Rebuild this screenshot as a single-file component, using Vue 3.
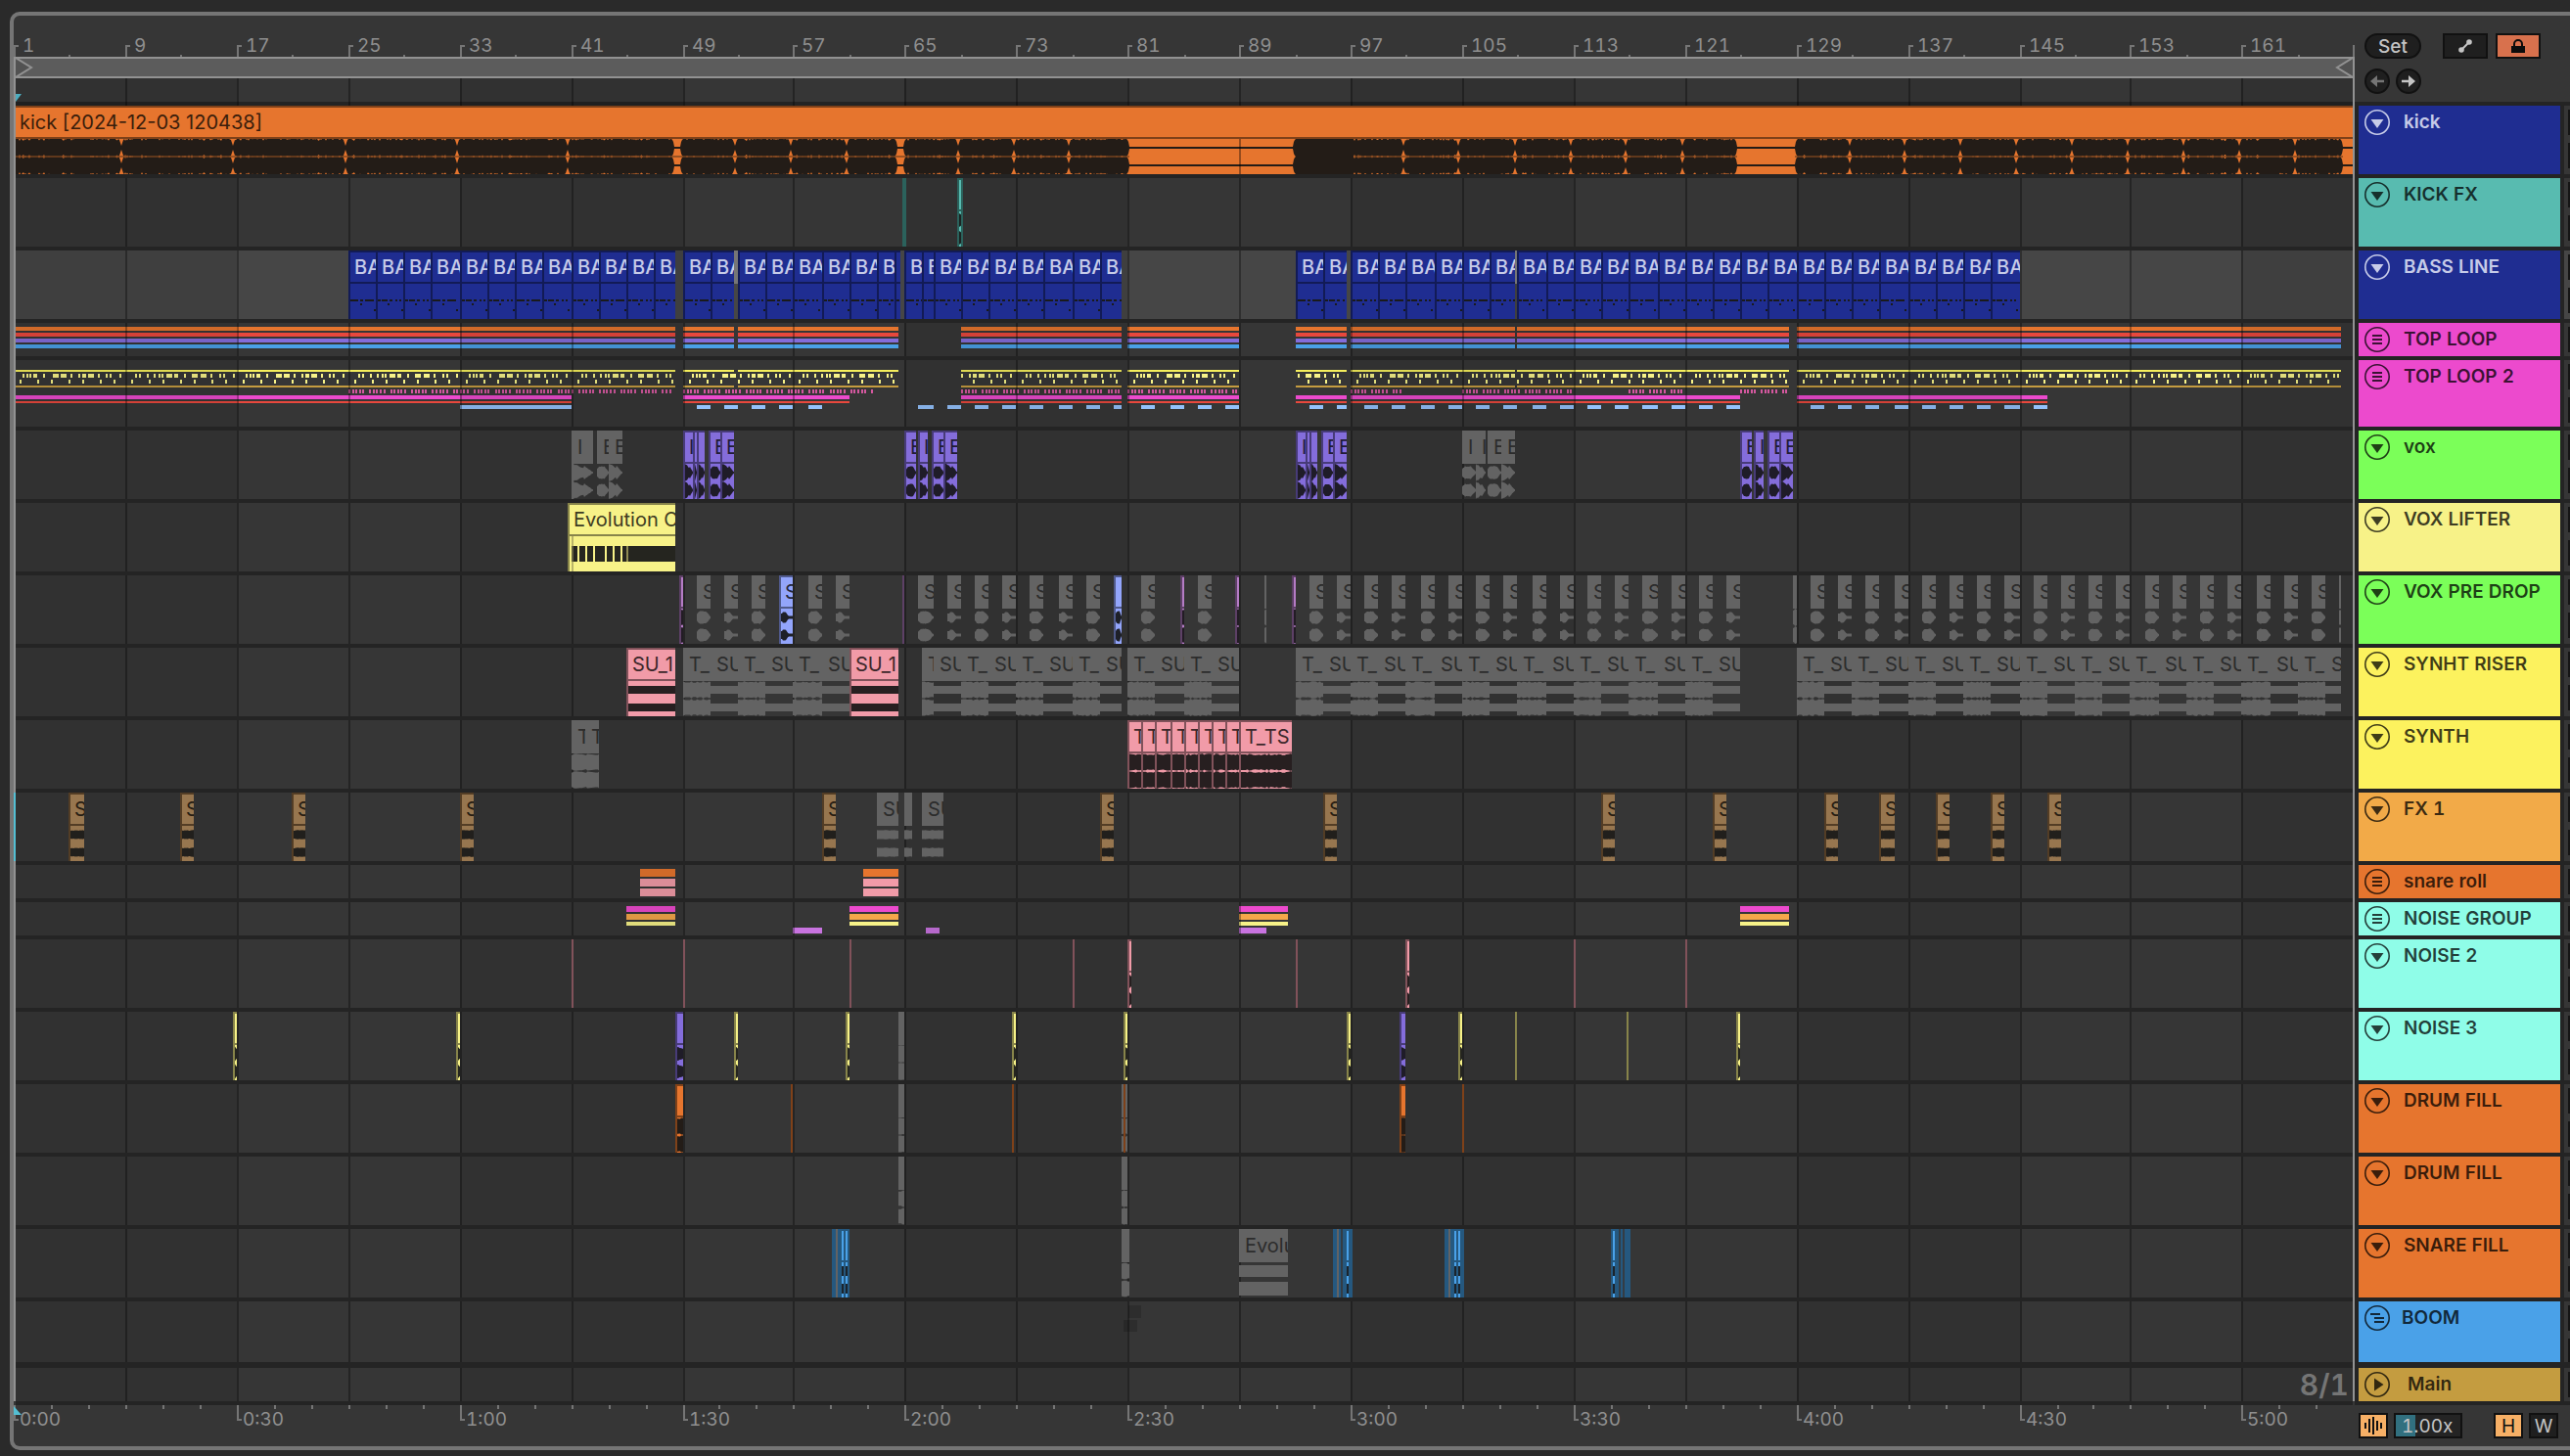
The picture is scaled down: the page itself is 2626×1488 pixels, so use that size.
<script setup>
// Timeline geometry: bar number -> device-snapped x inside the lane area.
const BAR = 14.23
const ORIGIN = 14.97
const EDGE = 16
const barX = (bar) => 2 * Math.floor((ORIGIN + BAR * (bar - 1)) / 2) - EDGE
const at = (x) => x - EDGE

const range = (from, to, step = 1) => {
  const out = []
  for (let i = from; i <= to; i += step) out.push(i)
  return out
}
const noise = (i) => {
  const v = Math.sin(i * 127.1 + 11.7) * 43758.5453
  return v - Math.floor(v)
}

/* ---------- rulers and grid ---------- */
const barTicks = range(1, 161, 8).map((bar) => ({ bar, x: barX(bar) }))
const minorTicks = range(5, 165, 8).map((bar) => barX(bar))
const gridLines = range(9, 161, 8).map((bar) => barX(bar))
const bands = range(1, 161, 32).map((bar) => ({ x: Math.max(0, barX(bar)), w: barX(bar + 16) - Math.max(0, barX(bar)) }))
const timeTicks = range(0, 10).map((i) => ({
  label: `${Math.floor(i / 2)}:${i % 2 ? '30' : '00'}`,
  x: barX(1 + i * 16),
}))
const timeMinor = range(1, 62).filter((i) => i % 6).map((i) => barX(1 + (i * 16) / 6))

/* ---------- waveforms ---------- */
function blob(w, profile, seed = 1) {
  const width = Math.max(2, w)
  let d = ''
  for (const c of [9, 27]) {
    const top = []
    const bottom = []
    for (let x = 0; x <= width; x += 1) {
      const h = profile(x, width, seed)
      top.push(`${x} ${(c - h).toFixed(1)}`)
      bottom.unshift(`${x} ${(c + h).toFixed(1)}`)
    }
    d += `M${top.join('L')}L${bottom.join('L')}Z`
  }
  return d
}
const profiles = {
  full: (x, w, s) => 8.8 - noise(Math.floor(x / 2) + s) * 1.6,
  vox: (x, w, s) => {
    const u = x / w
    const base = u < 0.1 ? 8.5 : u < 0.55 ? 6.2 + 1.6 * Math.sin(u * 9) : 7 * (1 - u) / 0.45
    return Math.max(0.8, base + noise(x + s) * 0.6)
  },
  round: (x, w, s) => {
    const u = x / w
    return Math.max(1, (u < 0.2 ? 4 + u * 14 : u < 0.65 ? 6.8 : 6.8 - (u - 0.65) * 16) - noise(x + s))
  },
  neck: (x, w) => {
    const u = x / w
    return u < 0.15 ? 4 : u < 0.4 ? 5.6 : Math.max(1.6, 5.6 - (u - 0.4) * 18)
  },
  band: () => 4,
  rough: (x, w, s) => 4.8 - noise(x + s) * 0.7,
  taper: (x, w, s) => 7.5 - noise(x + s) * 0.8 - (x / w) * 2,
}

const pinches = [
  124, 238, 353, 467, 580, 751, 808, 865, 979, 1036, 1092, 1434, 1490, 1548, 1605, 1661, 1719,
  1890, 1946, 2003, 2060, 2117, 2174, 2231, 2288, 2345,
].map(at)
const silences = [[689, 695], [917, 923], [1154, 1321], [1775, 1834], [2394, 2410]].map(([a, b]) => [at(a), at(b)])
const kickProfile = (x) => {
  for (const [a, b] of silences) if (x >= a && x <= b) return 1
  const spike = noise(x)
  let h = spike > 0.72 ? 9 - (spike - 0.72) * 7 : 9
  if (x > at(1321) && x < at(1384)) h = 9
  for (const p of pinches) {
    const d = Math.abs(x - p)
    if (d < 3) h = Math.min(h, 2 + d * 3)
  }
  for (const [a, b] of silences) {
    const d = Math.min(Math.abs(x - a), Math.abs(x - b))
    if (d < 3) h = Math.min(h, 4 + d * 2)
  }
  return h
}
const kickWave = blob(at(2404), kickProfile)

/* ---------- clips ---------- */
let seed = 0
function clip(kind, x1, x2, text = '', wave = 'full') {
  seed += 7
  const w = x2 - x1
  const inner = w - (kind === 'gray' ? 0 : 2)
  return {
    kind, text, wave, w, inner, x: x1,
    path: profiles[wave] && inner > 0 ? blob(inner, profiles[wave], seed) : '',
  }
}
const px = (kind, a, b, text, wave) => clip(kind, at(a), at(b), text, wave)
const bars = (kind, a, b, text, wave) => clip(kind, barX(a), barX(b), text, wave)

function chain(starts, end, make) {
  return starts.map((s, i) => make(s, i + 1 < starts.length ? starts[i + 1] : end, i))
}
const bass = (s, e) => bars('navy', s, e, e - s > 0.5 ? (e - s > 1.4 ? 'BA' : 'B') : '', 'midi')
const bassClips = [
  ...chain(range(25, 47, 2), 48.5, bass),
  ...chain([49, 51], 52.75, bass),
  ...chain([53, 55, 57, 59, 61, 63, 64.3], 64.65, bass),
  ...chain([65, 66.2, 67, 69, 71, 73, 75, 77, 79], 80.5, bass),
  ...chain([93, 95], 96.75, bass),
  ...chain(range(97, 107, 2), 108.85, bass),
  ...chain(range(109, 143, 2), 145, bass),
]

const voxA = (x) => [
  px('violet', x, x + 10, 'I', 'vox'), px('violet', x + 10, x + 14, '', 'vox'), px('violet', x + 14, x + 22, '', 'vox'),
  px('violet', x + 26, x + 38, 'E', 'round'), px('violet', x + 38, x + 52, 'E', 'vox'),
]
const voxB = (x) => [
  px('violet', x, x + 12, 'E', 'round'), px('violet', x + 14, x + 24, 'I', 'vox'),
  px('violet', x + 28, x + 40, 'E', 'round'), px('violet', x + 40, x + 54, 'E', 'vox'),
]
const voxClips = [
  px('gray', 584, 606, 'I', 'vox'), px('gray', 610, 622, 'E', 'round'), px('gray', 622, 636, 'E', 'vox'),
  ...voxA(698), ...voxB(924), ...voxA(1324),
  px('gray', 1494, 1508, 'I', 'round'), px('gray', 1508, 1518, 'I', 'vox'),
  px('gray', 1520, 1534, 'E', 'round'), px('gray', 1534, 1548, 'E', 'vox'),
  ...voxB(1778),
]

const drop = (b) => bars('gray', b, b + 1, 'S', b % 4 === 2 ? 'round' : 'neck')
const dropClips = [
  px('orchid', 694, 698), drop(50), drop(52), drop(54), bars('sky', 56, 57, 'S', 'neck'), drop(58), drop(60),
  px('orchid', 922, 924), ...range(66, 78, 2).map(drop), px('sky', 1138, 1146, '', 'round'), drop(82),
  px('orchid', 1206, 1210), drop(86), px('orchid', 1262, 1266), px('gray', 1292, 1294), px('orchid', 1320, 1324),
  ...range(94, 124, 2).map(drop), px('gray', 1832, 1836), ...range(130, 166, 2).map(drop), px('gray', 2390, 2392),
]

const riser = (s, e, i) => bars('gray', s, e, i % 2 ? 'SU' : e - s > 1 ? 'T_' : 'T', i % 2 ? 'band' : 'full')
const riserClips = [
  bars('pink', 45, 48.5, 'SU_1', 'band'),
  ...chain(range(49, 59, 2), 61, riser),
  px('pink', 868, 918, 'SU_1', 'band'),
  ...chain([66.2, ...range(67, 79, 2)], 80.5, riser),
  ...chain(range(81, 87, 2), 89, riser),
  ...chain(range(93, 123, 2), 125, riser),
  ...chain(range(129, 167, 2), 168.1, riser),
]

const synthClips = [
  px('gray', 584, 598, 'T'), px('gray', 598, 612, 'T', 'full'),
  ...chain(range(81, 89), 92.8, (s, e) => bars('pink', s, e, e - s > 2 ? 'T_TS' : 'T', 'full')),
]

const fxClips = [
  ...[[70, 86], [184, 198], [298, 312], [470, 484], [840, 854], [1124, 1138], [1352, 1366], [1636, 1650],
    [1750, 1764], [1864, 1878], [1920, 1936], [1978, 1992], [2034, 2048], [2092, 2106]]
    .map(([a, b]) => px('brown', a, b, 'S', 'rough')),
  px('gray', 896, 918, 'SU', 'rough'), px('gray', 924, 932, '', 'rough'), px('gray', 942, 964, 'SU', 'rough'),
]

const thin = (kind, xs, w) => xs.map((x) => px(kind, x, x + w, '', 'taper'))

/* ---------- group overview strips ---------- */
const strip = (color, y, h, segs) => segs.map(([a, b]) => ({ color, y, h, x: Math.max(0, a), w: b - Math.max(0, a) }))
const seg = (list) => list.map(([a, b]) => [barX(a), barX(b)])
const loopSegs = seg([[1, 48.5], [49, 52.75], [53, 64.6], [69, 80.5], [81, 89], [93, 96.75], [97, 108.85], [109, 128.5], [129, 168.1]])
const magentaSegs = seg([[1, 41], [49, 61], [69, 80.5], [81, 89], [93, 96.75], [97, 125], [129, 147]])
const tickSegs = seg([[25, 48.5], [49, 63], [69, 80.5], [81, 89], [97, 100.8], [105, 113], [117, 121], [125, 128.5]])
const blueSegs = seg([
  [33, 41],
  ...[...range(50, 58, 2), ...range(66, 78, 2), ...range(82, 88, 2), 94, ...range(98, 124, 2), ...range(130, 146, 2)].map((b) => [b, b + 1]),
  [80, 80.5], [96, 96.75],
])
const upperA = [[9, 2], [13, 2], [16, 2], [20, 4], [30, 2], [40, 6], [48, 6], [58, 2], [66, 2], [70, 4], [76, 6], [86, 2], [94, 2], [98, 2], [108, 2]]
const upperB = [[10, 2], [14, 2], [22, 2], [29, 2], [34, 2], [37, 2], [42, 6], [50, 4], [60, 2], [68, 6], [77, 6], [87, 2], [96, 2], [100, 2], [110, 2]]
const lower = [[6, 2], [24, 2], [38, 2], [56, 2], [70, 2], [88, 2], [102, 2]]
const inLoop = ([x]) => loopSegs.some(([a, b]) => x >= a && x < b - 1)
const pattern = (pick) => range(1, 161, 8)
  .flatMap((bar, i) => pick(i).map(([o, w]) => [barX(bar) + o, barX(bar) + o + w]))
  .filter(inLoop)
const upperNotes = pattern((i) => (i % 2 ? upperB : upperA))
const lowerNotes = pattern(() => lower)
const pinkTicks = tickSegs.flatMap(([a, b]) =>
  range(0, Math.floor((b - a) / 3.56) - 1).filter((i) => i % 6 !== 5).map((i) => {
    const x = a + Math.round(i * 3.56)
    return [x, x + 2]
  }))

const topLoop = [
  ...strip('#e6752e', 4, 4, loopSegs), ...strip('#e8483d', 10, 4, loopSegs),
  ...strip('#846ddb', 16, 4, loopSegs), ...strip('#4aa1e8', 22, 4, loopSegs),
]
const topLoop2 = [
  ...strip('#f5ee5c', 10, 2, loopSegs), ...strip('#f7f288', 14, 4, upperNotes), ...strip('#f7f288', 20, 4, lowerNotes),
  ...strip('#c49c40', 26, 2, loopSegs), ...strip('#d4589f', 30, 4, pinkTicks),
  ...strip('#ec4acd', 36, 4, magentaSegs), ...strip('#e8483d', 42, 2, magentaSegs), ...strip('#93c1fb', 46, 4, blueSegs),
]
const p = (list) => list.map(([a, b]) => [at(a), at(b)])
const rollSegs = p([[654, 690], [882, 918]])
const snareRoll = [...strip('#e6752e', 4, 8, rollSegs), ...strip('#f19ba8', 14, 8, rollSegs), ...strip('#f19ba8', 24, 8, rollSegs)]
const noiseSegs = p([[640, 690], [868, 918], [1266, 1316], [1778, 1828]])
const noiseGroup = [
  ...strip('#ec4acd', 4, 6, noiseSegs), ...strip('#f5a74a', 12, 6, noiseSegs), ...strip('#f7f288', 20, 4, noiseSegs),
  ...strip('#c873e0', 26, 6, p([[810, 840], [946, 960], [1266, 1294]])),
]
const boom = [...strip('#2d2d2d', 4, 13, p([[1153, 1166]])), ...strip('#2d2d2d', 19, 12, p([[1148, 1162]]))]

/* Snare fill bursts: dark bodies with brighter hits. */
const bursts = [
  { x: 850, w: 18, dim: [4], hit: [10, 14], cut: [] },
  { x: 1362, w: 20, dim: [4], hit: [14], cut: [8] },
  { x: 1476, w: 20, dim: [4], hit: [10, 14], cut: [] },
  { x: 1646, w: 20, dim: [], hit: [2], cut: [8, 12] },
].map((b) => ({ ...b, x: at(b.x) }))

const N = 'tall'
const tracks = [
  { name: 'kick', color: '#1f2d91', size: N, icon: 'fold', light: true, kick: true },
  { name: 'KICK FX', color: '#58bbb0', size: N, icon: 'fold', clips: [px('teal', 922, 924), px('teal', 924, 926), px('teal', 978, 982, '', 'taper'), px('teal', 982, 984)] },
  { name: 'BASS LINE', color: '#1f2d91', size: N, icon: 'fold', light: true, selected: true, clips: bassClips, marks: [[at(750), 4], [at(1548), 2]] },
  { name: 'TOP LOOP', color: '#ec4acd', size: 'short', icon: 'group', strips: topLoop },
  { name: 'TOP LOOP 2', color: '#ec4acd', size: 'mid', icon: 'group', strips: topLoop2 },
  { name: 'vox', color: '#7bff59', size: N, icon: 'fold', clips: voxClips },
  { name: 'VOX LIFTER', color: '#f7f288', size: N, icon: 'fold', clips: [px('lemon', 580, 690, 'Evolution O', 'lifter')] },
  { name: 'VOX PRE DROP', color: '#7bff59', size: N, icon: 'fold', clips: dropClips },
  { name: 'SYNHT RISER', color: '#fcf25e', size: N, icon: 'fold', clips: riserClips },
  { name: 'SYNTH', color: '#fcf25e', size: N, icon: 'fold', clips: synthClips },
  { name: 'FX 1', color: '#f2aa48', size: N, icon: 'fold', clips: fxClips, cursor: true },
  { name: 'snare roll', color: '#e6752e', size: 'short', icon: 'group', strips: snareRoll },
  { name: 'NOISE GROUP', color: '#8ffde8', size: 'short', icon: 'group', strips: noiseGroup },
  { name: 'NOISE 2', color: '#8ffde8', size: N, icon: 'fold', clips: [...thin('pink', [584, 698, 868, 1096, 1324, 1608, 1722], 2), ...thin('pink', [1152, 1436], 4)] },
  {
    name: 'NOISE 3', color: '#8ffde8', size: N, icon: 'fold',
    clips: [...thin('lemon', [238, 466, 750, 864, 1034, 1148, 1376, 1490, 1774], 4), ...thin('lemon', [1548, 1662], 2),
      px('violet', 690, 698, '', 'taper'), px('gray', 918, 924, '', 'full'), px('violet', 1430, 1436, '', 'taper')],
  },
  {
    name: 'DRUM FILL', color: '#e6752e', size: N, icon: 'fold',
    clips: [px('orange', 690, 698, '', 'full'), px('gray', 918, 924), px('gray', 1146, 1152), px('orange', 1430, 1436, '', 'full'),
      ...thin('orange', [808, 1034, 1148, 1494], 2)],
  },
  { name: 'DRUM FILL', color: '#e6752e', size: N, icon: 'fold', clips: [px('gray', 918, 924), px('gray', 1146, 1152)] },
  { name: 'SNARE FILL', color: '#e6752e', size: N, icon: 'fold', clips: [px('gray', 1146, 1154), px('gray', 1266, 1316, 'Evolu', 'slabs')], bursts },
  { name: 'BOOM', color: '#4aa1e8', size: 'boom', icon: 'nested', strips: boom },
  { name: 'Main', color: '#c49c40', size: 'short', icon: 'play', main: true },
]
</script>

<template>
  <main class="page">
    <div class="frame">
      <section class="timeline" aria-label="Arrangement">
        <div class="ruler">
          <svg class="layer" aria-hidden="true">
            <g fill="#757575">
              <rect v-for="t in barTicks" :key="'a' + t.bar" :x="t.x + 2" y="30" width="2" height="12" />
              <rect v-for="t in barTicks" :key="'b' + t.bar" :x="t.x + 2" y="30" width="5" height="2" />
              <rect v-for="x in minorTicks" :key="'m' + x" :x="x + 2" y="40" width="2" height="2" />
              <rect x="2390" y="30" width="2" height="12" />
            </g>
          </svg>
          <span v-for="t in barTicks" :key="t.bar" class="bar-label" :style="{ left: t.x + 11 + 'px' }">{{ t.bar }}</span>
        </div>

        <div class="canvas">
          <div class="loop">
            <svg width="18" height="22" viewBox="0 0 18 22" aria-hidden="true"><path d="M0 1L16 11L0 21" /></svg>
            <svg width="18" height="22" viewBox="0 0 18 22" aria-hidden="true"><path d="M18 1L2 11L18 21" /></svg>
          </div>
          <div class="scrub">
            <svg width="6" height="8" viewBox="0 0 6 8" aria-hidden="true"><path d="M0 0H6L0 8Z" fill="#54bfd3" /></svg>
          </div>

          <div class="lanes">
            <div v-for="(t, i) in tracks" :key="i" class="lane" :class="[t.size, { selected: t.selected, main: t.main }]">
              <svg v-if="t.strips" class="layer" aria-hidden="true">
                <rect v-for="(s, k) in t.strips" :key="k" :x="s.x" :y="s.y" :width="s.w" :height="s.h" :fill="s.color" />
              </svg>

              <div v-if="t.kick" class="clip kick-clip orange">
                <span class="clip-title">kick [2024-12-03 120438]</span>
                <svg class="wave" height="36" aria-hidden="true">
                  <path :d="kickWave" />
                  <rect x="0" y="17" width="1138" height="2" fill="#7a451f" fill-opacity="0.7" />
                  <rect x="1368" y="17" width="391" height="2" fill="#7a451f" fill-opacity="0.7" />
                  <rect x="1818" y="17" width="560" height="2" fill="#7a451f" fill-opacity="0.7" />
                  <rect x="1250" y="0" width="2" height="36" fill="#000" fill-opacity="0.35" />
                </svg>
              </div>

              <div v-for="(m, k) in t.marks || []" :key="'k' + k" class="mark" :style="{ left: m[0] + 'px', width: m[1] + 'px' }"></div>

              <div
                v-for="(c, k) in t.clips || []"
                :key="k"
                class="clip"
                :class="c.kind"
                :style="{ left: c.x + 'px', width: c.w + 'px' }"
              >
                <span class="clip-title">{{ c.text }}</span>
                <svg class="wave" height="36" aria-hidden="true">
                  <path v-if="c.path" :d="c.path" />
                  <template v-else-if="c.wave === 'midi'">
                    <rect x="0" y="16" :width="k % 3 ? 3 : 8" height="2" />
                    <rect :x="k % 3 ? 4 : 10" y="16" :width="k % 3 ? 6 : 3" height="2" />
                    <rect :x="k % 3 ? 12 : 15" y="16" :width="k % 3 ? 3 : 8" height="2" />
                    <rect x="18" y="16" width="2" height="2" />
                    <rect x="22" y="16" width="2" height="2" />
                    <rect x="10" y="20" width="2" height="2" />
                    <rect x="24" y="26" width="2" height="2" />
                  </template>
                  <template v-else-if="c.wave === 'lifter'">
                    <rect x="2" y="10" width="106" height="16" />
                    <rect v-for="g in [8, 16, 24, 36, 44, 52]" :key="g" :x="g" y="10" width="2" height="16" fill="#f7f288" />
                    <rect x="58" y="10" width="2" height="16" fill="#8f8b53" />
                    <rect x="2" y="0" width="2" height="36" fill="#8f8b53" fill-opacity="0.6" />
                  </template>
                  <template v-else-if="c.wave === 'slabs'">
                    <rect x="0" y="3" width="50" height="12" />
                    <rect x="0" y="20" width="50" height="14" />
                  </template>
                </svg>
              </div>

              <svg v-if="t.bursts" class="layer over" aria-hidden="true">
                <g v-for="b in t.bursts" :key="b.x">
                  <rect :x="b.x" y="0" :width="b.w" height="70" fill="#25587f" />
                  <rect v-for="d in b.dim" :key="'d' + d" :x="b.x + d" y="0" width="2" height="70" fill="#636363" />
                  <rect v-for="d in b.cut" :key="'c' + d" :x="b.x + d" y="0" width="2" height="70" fill="#343c44" />
                  <g v-for="d in b.hit" :key="'h' + d">
                    <rect :x="b.x + d" y="2" width="2" height="30" fill="#4aa1e8" />
                    <rect :x="b.x + d" y="34" width="2" height="36" fill="#4aa1e8" />
                    <rect :x="b.x + d" y="38" width="2" height="10" fill="#1b242c" />
                    <rect :x="b.x + d" y="56" width="2" height="10" fill="#1b242c" />
                  </g>
                </g>
              </svg>
              <div v-if="t.cursor" class="cursor"></div>
              <span v-if="t.main" class="zoom-label">8/1</span>
            </div>
          </div>

          <svg class="grid" aria-hidden="true">
            <rect v-for="b in bands" :key="'s' + b.x" :x="b.x" y="0" :width="b.w" height="100%" fill="#000" fill-opacity="0.09" />
            <rect v-for="x in gridLines" :key="x" :x="x" y="0" width="2" height="100%" fill="#000" fill-opacity="0.32" />
          </svg>
        </div>

        <div class="times">
          <svg class="layer" aria-hidden="true">
            <g fill="#757575">
              <rect v-for="t in timeTicks" :key="'a' + t.x" :x="t.x + 2" y="0" width="2" height="16" />
              <rect v-for="t in timeTicks" :key="'b' + t.x" :x="t.x + 2" y="14" width="5" height="2" />
              <rect v-for="x in timeMinor" :key="'m' + x" :x="x + 2" y="0" width="2" height="4" />
            </g>
            <path d="M0 1L8 10H0Z" fill="#54bfd3" />
          </svg>
          <span v-for="t in timeTicks" :key="t.x" class="time-label" :style="{ left: t.x + 8 + 'px' }">{{ t.label }}</span>
        </div>
      </section>

      <aside class="side">
        <div class="tools">
          <div class="tool-row">
            <button type="button" class="pill set">Set</button>
            <button type="button" class="box wide auto" aria-label="Automation mode">
              <svg width="16" height="16" viewBox="0 0 16 16" aria-hidden="true">
                <path d="M4 12L12 4" stroke="#c4c4c4" stroke-width="2" /><circle cx="4" cy="12" r="2.800" fill="#c4c4c4" /><circle cx="12" cy="4" r="2.800" fill="#c4c4c4" />
              </svg>
            </button>
            <button type="button" class="box wide lock" aria-label="Lock envelopes">
              <svg width="16" height="16" viewBox="0 0 16 16" aria-hidden="true">
                <path d="M4 8V6a4 4 0 0 1 8 0V8" fill="none" stroke="#0c0c0c" stroke-width="2" /><rect x="1" y="8" width="14" height="7" fill="#0c0c0c" />
              </svg>
            </button>
          </div>
          <div class="tool-row arrows">
            <button type="button" class="pill round" aria-label="Previous locator">
              <svg width="16" height="14" viewBox="0 0 16 14" aria-hidden="true"><path d="M1 7L8 1V5.700H15V8.300H8V13Z" fill="#757575" /></svg>
            </button>
            <button type="button" class="pill round" aria-label="Next locator">
              <svg width="16" height="14" viewBox="0 0 16 14" aria-hidden="true"><path d="M15 7L8 1V5.700H1V8.300H8V13Z" fill="#c4c4c4" /></svg>
            </button>
          </div>
        </div>

        <div class="heads">
          <div v-for="(t, i) in tracks" :key="i" class="head-row" :class="[t.size, { selected: t.selected }]">
            <div class="head" :class="{ light: t.light, indent: t.main, nested: t.icon === 'nested' }" :style="{ background: t.color }">
              <button type="button" class="fold" :aria-label="'Fold ' + t.name">
                <svg width="26" height="26" viewBox="0 0 26 26" aria-hidden="true">
                  <circle cx="13" cy="13" r="12.200" fill="none" stroke="currentColor" stroke-width="1.600" />
                  <path v-if="t.icon === 'fold'" d="M6.500 10H19.500L13 19Z" fill="currentColor" />
                  <path v-else-if="t.icon === 'play'" d="M10 6.500V19.500L19.500 13Z" fill="currentColor" />
                  <path v-else-if="t.icon === 'group'" d="M8 9H18M8 13H18M8 17H18" stroke="currentColor" stroke-width="2" />
                  <path v-else d="M6 9H16M10 13H20M10 17H20" stroke="currentColor" stroke-width="2" />
                </svg>
              </button>
              <span class="name">{{ t.name }}</span>
            </div>
            <div class="mixer"><i></i><i v-if="t.size !== 'short'"></i></div>
          </div>
        </div>

        <div class="foot">
          <button type="button" class="box amber" aria-label="Waveform zoom">
            <svg width="18" height="18" viewBox="0 0 18 18" aria-hidden="true"><path d="M1 6V12M5 2V16M9 0V18M13 4V14M17 6V12" stroke="#111" stroke-width="2" /></svg>
          </button>
          <input class="speed" type="text" value="1.00x" aria-label="Waveform height" />
          <button type="button" class="box amber h">H</button>
          <button type="button" class="box w">W</button>
        </div>
      </aside>
    </div>
  </main>
</template>

<style>
body {
  background: #2a2a2a;
}
</style>

<style scoped>
* {
  box-sizing: border-box;
}
.page {
  padding: 12px 0 6px 10px;
  background: #2a2a2a;
  font-family: Inter, "Liberation Sans", sans-serif;
  font-size: 19px;
  font-variant-numeric: tabular-nums;
  overflow: hidden;
}
.frame {
  display: flex;
  border: 4px solid #757575;
  border-right: 0;
  border-radius: 10px 0 0 10px;
  background: #363636;
}
button,
input {
  font: inherit;
  padding: 0;
  margin: 0;
}
button {
  display: flex;
  align-items: center;
  justify-content: center;
}

/* timeline */
.timeline {
  flex: 1;
  min-width: 0;
  overflow: hidden;
}
.layer {
  position: absolute;
  inset: 0;
  width: 100%;
  height: 100%;
}
.ruler,
.times {
  position: relative;
  height: 42px;
}
.bar-label,
.time-label {
  position: absolute;
  color: #8f8f8f;
  line-height: 24px;
}
.bar-label {
  top: 19px;
}
.time-label {
  top: 3px;
}
.canvas {
  position: relative;
  border: solid #929292;
  border-width: 0 2px;
}
.loop {
  position: relative;
  z-index: 4;
  display: flex;
  justify-content: space-between;
  height: 22px;
  background: #5c5c5c;
  box-shadow: inset 0 2px #929292, inset 0 -2px #929292;
}
.loop path {
  fill: #525252;
  stroke: #929292;
  stroke-width: 2;
}
.scrub {
  height: 28px;
  padding-top: 16px;
  border-bottom: 4px solid #242424;
}
.scrub svg {
  display: block;
}
.grid {
  position: absolute;
  top: 22px;
  left: 0;
  z-index: 2;
  width: 100%;
  height: calc(100% - 22px);
  pointer-events: none;
}
.lane {
  position: relative;
  margin-bottom: 4px;
}
.lane::after {
  content: "";
  position: absolute;
  top: 100%;
  left: 0;
  right: 0;
  z-index: 3;
  height: 4px;
  background: #242424;
}
.lane.selected {
  background: #464646;
}
.tall {
  height: 70px;
}
.mid {
  height: 68px;
}
.short {
  height: 34px;
}
.boom {
  height: 62px;
  margin-bottom: 6px;
}
.lane.boom::after {
  height: 6px;
}
.over {
  z-index: 3;
}

/* clips */
.clip {
  --c: #636363;
  --edge: #636363;
  --wave: #636363;
  --ink: #2c2c2c;
  position: absolute;
  top: 0;
  z-index: 3;
  height: 70px;
  overflow: hidden;
  border: solid var(--edge);
  border-width: 2px 0 0 2px;
  background: var(--c);
  font-size: 20px;
  font-variant-numeric: normal;
}
.clip-title {
  display: block;
  height: 32px;
  padding-left: 4px;
  border-bottom: 2px solid var(--edge);
  color: var(--ink);
  line-height: 30px;
  white-space: nowrap;
}
.wave {
  display: block;
  width: 100%;
  overflow: hidden;
  fill: var(--wave);
}
.clip.gray {
  border-width: 0;
  background: none;
}
.gray .clip-title {
  height: 34px;
  padding-left: 6px;
  border: 0;
  background: var(--c);
  line-height: 34px;
}
.clip.kick-clip {
  left: 0;
  right: 0;
  border-left: 0;
}
.orange {
  --c: #e6752e;
  --edge: #7f4119;
  --wave: #231c17;
  --ink: #3a1d0b;
}
.teal {
  --c: #58bbb0;
  --edge: #2b625c;
  --wave: #1c2423;
}
.navy {
  --c: #1f2d91;
  --edge: #121b56;
  --wave: #1a1a1a;
  --ink: #c6cbe8;
  font-weight: 500;
}
.violet {
  --c: #846ddb;
  --edge: #473b78;
  --wave: #1f1c28;
  --ink: #211b37;
}
.lemon {
  --c: #f7f288;
  --edge: #87844a;
  --wave: #25251f;
  --ink: #3d3b22;
}
.orchid {
  --c: #b57cc5;
  --edge: #5d4066;
  --wave: #231c25;
}
.sky {
  --c: #93a5fb;
  --edge: #505a8b;
  --wave: #1e2028;
  --ink: #25293f;
}
.pink {
  --c: #f19ba8;
  --edge: #81525a;
  --wave: #271f20;
  --ink: #3c272a;
}
.brown {
  --c: #97764f;
  --edge: #533d25;
  --wave: #211f1c;
  --ink: #261d13;
}
.mark {
  position: absolute;
  top: 0;
  z-index: 3;
  height: 34px;
  background: #767676;
}
.cursor {
  position: absolute;
  top: 0;
  left: -2px;
  z-index: 4;
  width: 2px;
  height: 100%;
  background: #54bfd3;
}
.zoom-label {
  position: absolute;
  right: 4px;
  top: 0;
  z-index: 3;
  color: #757575;
  font-size: 30px;
  font-weight: 600;
  line-height: 34px;
}

/* side column */
.side {
  width: 220px;
  flex: none;
}
.tools {
  height: 92px;
  padding: 18px 0 0 10px;
  border-bottom: 4px solid #242424;
}
.tool-row {
  display: flex;
}
.arrows {
  gap: 6px;
  margin-top: 10px;
}
.pill {
  height: 26px;
  border: 2px solid #111;
  border-radius: 13px;
  background: #1f1f1f;
  color: #c4c4c4;
}
.set {
  width: 58px;
  font-weight: 500;
}
.round {
  width: 26px;
}
.box {
  width: 30px;
  height: 26px;
  border: 2px solid #111;
  background: #1f1f1f;
  color: #c4c4c4;
}
.wide {
  width: 46px;
}
.auto {
  margin-left: 22px;
}
.lock {
  margin-left: 8px;
  background: #d8714d;
}
.head-row {
  display: flex;
  gap: 4px;
  margin-bottom: 4px;
  padding-left: 4px;
  background: #242424;
  box-shadow: 0 4px #242424;
}
.head-row.boom {
  margin-bottom: 6px;
  box-shadow: 0 6px #242424;
}
.head {
  display: flex;
  align-items: flex-start;
  flex: 1;
  gap: 14px;
  padding: 4px 0 0 6px;
  color: rgba(0, 0, 0, 0.75);
}
.head.light {
  color: #c6cbe8;
}
.head.indent {
  gap: 18px;
}
.head.nested {
  gap: 12px;
}
.fold {
  width: 26px;
  height: 26px;
  border: 0;
  background: none;
  color: inherit;
}
.name {
  font-weight: 600;
  line-height: 26px;
  white-space: nowrap;
}
.mixer {
  display: flex;
  flex-direction: column;
  gap: 8px;
  width: 6px;
  padding: 4px 0 0 4px;
  background: #363636;
  overflow: hidden;
}
.selected .mixer {
  background: #464646;
}
.mixer i {
  flex: none;
  height: 26px;
  background: #151515;
}
.foot {
  display: flex;
  padding: 8px 0 0 4px;
}
.amber {
  background: #f7b066;
  color: #111;
}
.speed {
  width: 70px;
  height: 26px;
  margin-left: 6px;
  padding-left: 6px;
  border: 2px solid #111;
  background: linear-gradient(90deg, #31707f 20px, #242424 20px);
  color: #c4c4c4;
}
.h {
  margin-left: 32px;
}
.w {
  margin-left: 6px;
}
</style>
